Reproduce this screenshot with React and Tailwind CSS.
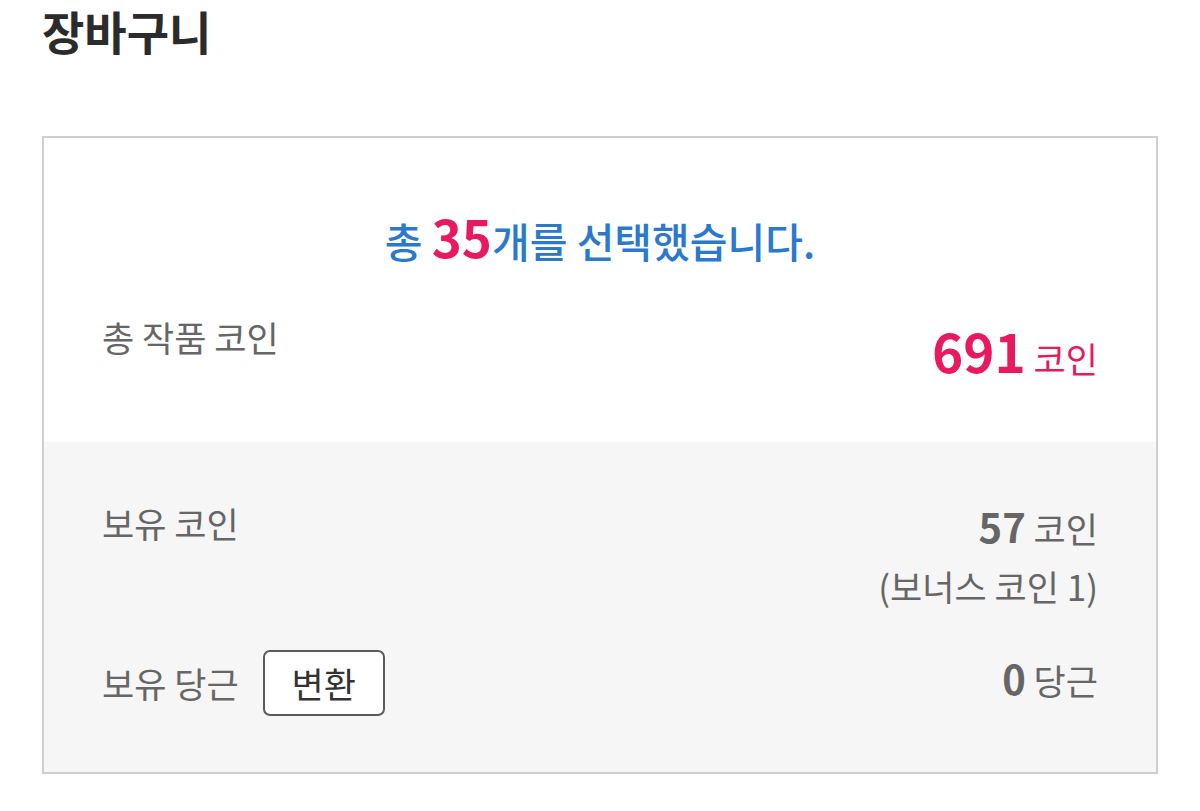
export default function App() {
  const font = { fontFamily: '"Noto Sans CJK KR", "Noto Sans", sans-serif' };
  return (
    <div className="w-[1200px] h-[811px] bg-white overflow-hidden" style={font}>
      <div className="px-[42px]">
        <h1 className="pt-[0px] text-[46px] leading-[60px] font-bold text-[#2b2b2b]">장바구니</h1>
        <div className="mt-[76px] border-2 border-[#cfcfcf]">
          <div className="bg-white h-[304px] px-[58px] flex flex-col">
            <div className="pt-[68px] text-center text-[41px] leading-[60px] font-medium text-[#2a79cc]">
              총 <span className="text-[51px] font-bold text-[#e8195e]">35</span>개를 선택했습니다.
            </div>
            <div className="mt-[42px] flex justify-between items-start">
              <div className="text-[35px] leading-[50px] text-[#666]">총 작품 코인</div>
              <div className="mt-[8px] text-[#e8195e] leading-[60px]">
                <span className="text-[53px] font-bold">691</span>
                <span className="text-[35px]"> 코인</span>
              </div>
            </div>
          </div>
          <div className="bg-[#f6f6f6] h-[330px] px-[58px] pt-[56px]">
            <div className="flex justify-between items-start">
              <div className="text-[35px] leading-[50px] text-[#666]">보유 코인</div>
              <div className="text-right text-[#666]">
                <div className="leading-[56px]">
                  <span className="text-[40px] font-bold">57</span>
                  <span className="text-[35px]"> 코인</span>
                </div>
                <div className="text-[35px] leading-[44px]">(보너스 코인 1)</div>
              </div>
            </div>
            <div className="mt-[42px] flex justify-between items-center">
              <div className="flex items-center">
                <span className="text-[35px] leading-[50px] text-[#666]">보유 당근</span>
                <button className="ml-[24px] w-[122px] h-[66px] border-2 border-[#5a5a5a] rounded-[7px] bg-white text-[35px] leading-[50px] text-[#333]">
                  변환
                </button>
              </div>
              <div className="text-[#666] leading-[56px]">
                <span className="text-[40px] font-bold">0</span>
                <span className="text-[35px]"> 당근</span>
              </div>
            </div>
          </div>
        </div>
      </div>
    </div>
  );
}
